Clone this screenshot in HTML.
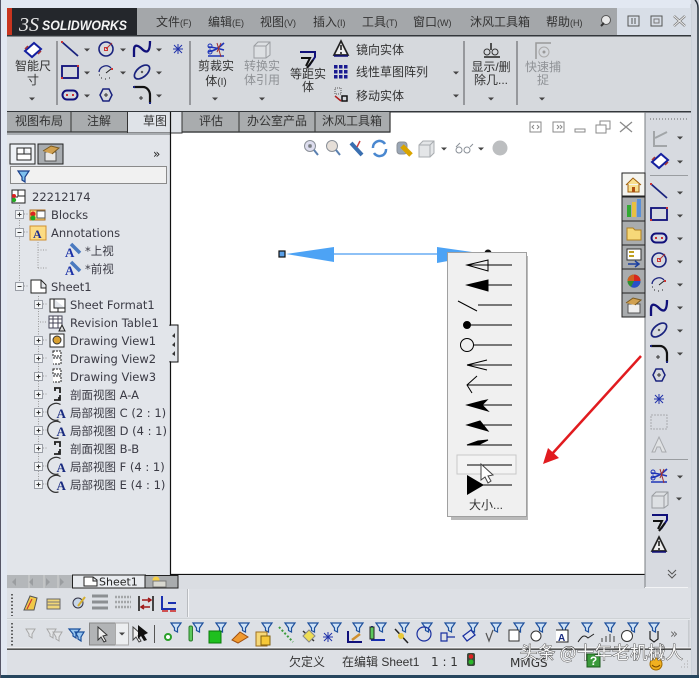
<!DOCTYPE html>
<html><head><meta charset="utf-8"><style>
html,body{margin:0;padding:0;width:699px;height:678px;overflow:hidden;background:#e3e8f1}
svg{display:block;filter:blur(.35px)}
text{font-family:"Liberation Sans","Noto Sans CJK SC",sans-serif;font-size:12px;fill:#333}
.c{text-anchor:middle}
.g{fill:#8f9296}
.t{font-family:"DejaVu Sans","Noto Sans CJK SC",sans-serif;font-size:11.500px;fill:#3a3a44}
</style></head><body>
<svg width="699" height="678" viewBox="0 0 699 678" xmlns="http://www.w3.org/2000/svg">
<defs>
<symbol id="arr" overflow="visible"><path d="M-3-1.500H3L0 1.500Z" fill="#444"/></symbol>
<symbol id="pl" overflow="visible"><rect x="-4" y="-4" width="8" height="8" fill="#f2f4f6" stroke="#9a9ea6"/><path d="M-2 0H2M0-2V2" stroke="#333"/></symbol>
<symbol id="mn" overflow="visible"><rect x="-4" y="-4" width="8" height="8" fill="#f2f4f6" stroke="#9a9ea6"/><path d="M-2 0H2" stroke="#333"/></symbol>
<symbol id="fn" overflow="visible"><path d="M-5-6H5L1.500-1V3L-1.500 1.500V-1Z" fill="#cfe3f7" stroke="#1d4f9c" stroke-width="1.200"/></symbol>
<symbol id="det" overflow="visible"><path d="M3-7.500A8.500 8.500 0 1 0 1 8" fill="none" stroke="#333" stroke-width="1.200"/><text x="-1" y="6" style="font-size:13px;font-family:'Liberation Serif',serif;fill:#1a2b80;font-weight:bold">A</text></symbol>
<symbol id="sec" overflow="visible"><path d="M-3-6H3V-1M-3 6H3V1M-2-6V-3M2 6V3" fill="none" stroke="#222" stroke-width="1.800"/></symbol>
<symbol id="line" overflow="visible"><path d="M-8-7L8 7" stroke="#1a237e" stroke-width="1.800"/><rect x="-9" y="-8" width="2" height="2" fill="#c33"/></symbol>
<symbol id="rc" overflow="visible"><rect x="-8" y="-6" width="16" height="12" fill="none" stroke="#10107a" stroke-width="1.800"/><path d="M-9 5h2v2h-2zM7-7h2v2H7z" fill="#c33"/></symbol>
<symbol id="slot" overflow="visible"><rect x="-7.500" y="-4.500" width="15" height="9" rx="4.500" fill="none" stroke="#10107a" stroke-width="2"/><path d="M-4-1h2v2h-2zM2-1h2v2H2z" fill="#c33"/></symbol>
<symbol id="circ" overflow="visible"><circle r="7" fill="none" stroke="#1a237e" stroke-width="1.600"/><path d="M0 0L6-6" stroke="#a33"/><rect x="-1.500" y="-1.500" width="3" height="3" fill="none" stroke="#c33"/></symbol>
<symbol id="arc" overflow="visible"><path d="M-7 0A7 7 0 0 1 5-4" fill="none" stroke="#1a237e" stroke-width="1.300"/><path d="M-5 6h1M-1 7h1M3 6h1M-7 3h1M0 1L5-3" stroke="#222"/><path d="M5-4h2v2H5z" fill="#c33"/></symbol>
<symbol id="spl" overflow="visible"><path d="M-8 8V1C-8-6-3-3 0 0S8 6 8-8" fill="none" stroke="#10107a" stroke-width="2.300"/></symbol>
<symbol id="ell" overflow="visible"><ellipse rx="9" ry="5" transform="rotate(-40)" fill="none" stroke="#1a237e" stroke-width="1.700"/><path d="M-1-1l2 2M1-1l-2 2" stroke="#333" stroke-width=".7"/></symbol>
<symbol id="fil" overflow="visible"><path d="M-8-8H1C5-8 8-4 8 0V8" fill="none" stroke="#111" stroke-width="2.200"/><path d="M-3 3H1M-1 1V5" stroke="#333"/><path d="M-8-9v2M8 7v2" stroke="#1a237e" stroke-width="2"/></symbol>
<symbol id="poly" overflow="visible"><path d="M-3-6H3L6 0L3 6H-3L-6 0Z" fill="none" stroke="#1a237e" stroke-width="1.500"/><path d="M-2 0H2M0-2V2" stroke="#333"/></symbol>
<symbol id="ast" overflow="visible"><path d="M-5 0H5M0-5V5M-4-4L4 4M4-4L-4 4" stroke="#2233aa"/></symbol>
<symbol id="dim" overflow="visible"><path d="M-8 1L1-7L8-1L-1 7Z" fill="#fff" stroke="#1420a0" stroke-width="2"/><path d="M-8-1l3-3M8 1L5 4" stroke="#a33" stroke-width="1.500"/></symbol>
<symbol id="trim" overflow="visible"><path d="M-8-3C-2-3 4-1 8 0M-8 2C-2 1 4-3 8-7M-8 6H8" fill="none" stroke="#1f35b8" stroke-width="1.600"/><path d="M1-7L5 7M5-7L1 2" stroke="#a03030"/><circle cx="-6" cy="-4" r="2" fill="none" stroke="#1f35b8"/><circle cx="-6" cy="2" r="2" fill="none" stroke="#1f35b8"/></symbol>
<symbol id="cube" overflow="visible"><path d="M-8-4L-4-8H8V5L4 8H-8ZM-8-4H4V8M4-4L8-8" fill="#dde0e3" stroke="#9a9da1"/></symbol>
<symbol id="off" overflow="visible"><path d="M-8-7H7V-2L1 7" fill="none" stroke="#10107a" stroke-width="2"/><path d="M-7-1H2L-2 7M5 1L-1 9" fill="none" stroke="#111" stroke-width="2"/></symbol>
<symbol id="warn" overflow="visible"><path d="M0-8L7 6H-7Z" fill="#eee" stroke="#222" stroke-width="1.700"/><path d="M0-4V1M0 3V5" stroke="#222" stroke-width="1.600"/><path d="M-7 7H7" stroke="#10107a" stroke-width="1.500"/></symbol>
</defs>

<!-- window frame -->
<rect width="699" height="678" fill="#e2e8f2"/>
<rect x="691" y="0" width="8" height="678" fill="#d4d8e0"/>
<path d="M691 4V675" stroke="#c3cbd5" stroke-width="1"/>
<path d="M695 0Q698 3 698 8V678" stroke="#28323c" stroke-width="1.500" fill="none"/>
<rect x="0" y="675" width="699" height="3" fill="#26465e"/>
<rect x="0" y="0" width="1" height="678" fill="#556"/>

<!-- title bar -->
<rect x="7" y="8" width="130" height="28" fill="#24272c"/>
<rect x="7" y="8" width="5" height="28" fill="#c8351f"/>
<rect x="137" y="8" width="480" height="28" fill="#a4a7aa"/>
<rect x="617" y="8" width="74" height="28" fill="#d8dee7"/>
<text x="19" y="31" style="font-family:'Liberation Serif',serif;font-style:italic;font-size:20px;fill:#e8e8e8">3S</text>
<text x="42" y="30" style="font-family:'Liberation Sans',sans-serif;font-size:14px;font-style:italic;fill:#f4f4f4;font-weight:bold" textLength="85" lengthAdjust="spacingAndGlyphs">SOLIDWORKS</text>
<g>
<text x="156" y="26">文件<tspan style="font-size:9px">(F)</tspan></text>
<text x="208" y="26">编辑<tspan style="font-size:9px">(E)</tspan></text>
<text x="260" y="26">视图<tspan style="font-size:9px">(V)</tspan></text>
<text x="313" y="26">插入<tspan style="font-size:9px">(I)</tspan></text>
<text x="362" y="26">工具<tspan style="font-size:9px">(T)</tspan></text>
<text x="413" y="26">窗口<tspan style="font-size:9px">(W)</tspan></text>
<text x="470" y="26">沐风工具箱</text>
<text x="546" y="26">帮助<tspan style="font-size:9px">(H)</tspan></text>
</g>
<circle cx="606" cy="20" r="4.500" fill="#e8e8e8" stroke="#555"/><path d="M601 26L604 23" stroke="#333" stroke-width="2"/>
<rect x="628" y="16" width="11" height="10" fill="none" stroke="#555"/><path d="M632 18V24M635 18V24" stroke="#555"/>
<rect x="651" y="16" width="11" height="10" fill="none" stroke="#555"/><rect x="654" y="19" width="5" height="4" fill="none" stroke="#777"/>
<path d="M674 16L685 26M685 16L674 26" stroke="#777" stroke-width="2.500"/><path d="M674 16L685 26M685 16L674 26" stroke="#eee" stroke-width="1"/>
<rect x="7" y="35" width="684" height="1.500" fill="#33373b"/>

<!-- ribbon -->
<rect x="7" y="36.500" width="684" height="75" fill="#d6d9dd"/>
<path d="M57 41V105M190 41V105M464 41V105M517 41V105" stroke="#55585c"/>
<use href="#dim" x="33" y="50"/>
<text class="c" x="33" y="70">智能尺</text><text class="c" x="33" y="84">寸</text>
<use href="#arr" x="32" y="99"/>
<use href="#line" x="70" y="49"/><use href="#arr" x="87" y="50"/>
<use href="#circ" x="106" y="49"/><use href="#arr" x="123" y="50"/>
<use href="#spl" x="142" y="49"/><use href="#arr" x="159" y="50"/>
<use href="#ast" x="178" y="49"/>
<use href="#rc" x="70" y="72"/><use href="#arr" x="87" y="73"/>
<use href="#arc" x="106" y="72"/><use href="#arr" x="123" y="73"/>
<use href="#ell" x="142" y="72"/><use href="#arr" x="159" y="73"/>
<use href="#slot" x="70" y="95"/><use href="#arr" x="87" y="96"/>
<use href="#poly" x="106" y="95"/>
<use href="#fil" x="142" y="95"/><use href="#arr" x="159" y="96"/>
<use href="#trim" x="216" y="50"/>
<text class="c" x="216" y="70">剪裁实</text><text class="c" x="216" y="85">体<tspan style="font-size:10px">(I)</tspan></text>
<use href="#arr" x="215" y="99"/>
<use href="#cube" x="262" y="50"/>
<text class="c g" x="262" y="70">转换实</text><text class="c g" x="262" y="84">体引用</text>
<use href="#arr" x="262" y="99"/>
<use href="#off" x="308" y="59"/>
<text class="c" x="308" y="78">等距实</text><text class="c" x="308" y="91">体</text>
<use href="#warn" x="341" y="49"/>
<g fill="#1a1a90"><rect x="334" y="65" width="3.500" height="3.500"/><rect x="339" y="65" width="3.500" height="3.500"/><rect x="344" y="65" width="3.500" height="3.500"/><rect x="334" y="70" width="3.500" height="3.500"/><rect x="339" y="70" width="3.500" height="3.500"/><rect x="344" y="70" width="3.500" height="3.500"/><rect x="334" y="75" width="3.500" height="3.500"/><rect x="339" y="75" width="3.500" height="3.500"/><rect x="344" y="75" width="3.500" height="3.500"/></g>
<path d="M335 88h6v6h-6z" fill="none" stroke="#555" stroke-dasharray="1 1"/><rect x="342" y="96" width="5" height="5" fill="none" stroke="#111" stroke-width="1.500"/><path d="M335 96L341 101" stroke="#b02020" stroke-width="1.500"/>
<text x="356" y="54">镜向实体</text><text x="356" y="76">线性草图阵列</text><text x="356" y="100">移动实体</text>
<use href="#arr" x="456" y="73"/><use href="#arr" x="456" y="96"/>
<circle cx="487" cy="52" r="3" fill="none" stroke="#333"/><circle cx="495" cy="52" r="3" fill="none" stroke="#333"/><path d="M491 43V50M484 57H500" stroke="#222" stroke-width="1.500"/>
<text class="c" x="491" y="71">显示/删</text><text class="c" x="491" y="84">除几...</text>
<use href="#arr" x="491" y="99"/>
<path d="M536 59V43H551" fill="none" stroke="#999" stroke-width="1.500"/><circle cx="544" cy="52" r="5" fill="none" stroke="#aaa"/><circle cx="544" cy="52" r="1.500" fill="#999"/>
<text class="c g" x="543" y="71">快速捕</text><text class="c g" x="543" y="84">捉</text>
<use href="#arr" x="542" y="99"/>
<rect x="7" y="111" width="684" height="1.500" fill="#33373b"/>

<!-- canvas -->
<rect x="171" y="112.500" width="474" height="462" fill="#fff"/>
<rect x="7" y="112" width="383" height="21" fill="#d8dbe0"/>
<!-- tabs -->
<rect x="7" y="112" width="383" height="20" fill="#a9acae"/>
<path d="M7 132H127M182 132H390V112" stroke="#333" stroke-width="1.200" fill="none"/>
<path d="M71 112V132M239 112V132M315 112V132" stroke="#333"/>
<path d="M127.500 112V133H182V112" fill="#dfe3e8" stroke="#333"/>
<text class="c" x="39" y="125">视图布局</text><text class="c" x="99" y="125">注解</text><text class="c" x="155" y="125">草图</text><text class="c" x="211" y="125">评估</text><text class="c" x="277" y="125">办公室产品</text><text class="c" x="352" y="125">沐风工具箱</text>

<!-- view controls -->
<g stroke="#8a9098" fill="none">
<circle cx="310" cy="146" r="5.500" fill="#dde"/><path d="M314 150L318 155" stroke="#5a80b0" stroke-width="2"/><circle cx="310" cy="146" r="1.500" fill="#777"/>
<circle cx="332" cy="146" r="5.500" fill="#e6dfd8"/><path d="M336 150L340 155" stroke="#5a80b0" stroke-width="2"/>
<path d="M351 143L362 155" stroke="#3a6fb0" stroke-width="4"/><path d="M360 141L357 147" stroke="#c44" stroke-width="1.500"/>
<path d="M373 148A6.500 6.500 0 0 1 385 144" stroke="#4a88d0" stroke-width="2.500"/><path d="M386 149A6.500 6.500 0 0 1 374 153" stroke="#4a88d0" stroke-width="2.500"/>
<rect x="397" y="142" width="10" height="12" rx="3" fill="#9aa6b5"/><path d="M402 146L411 155" stroke="#d9a400" stroke-width="5"/>
<path d="M419 145L423 141H434V153L430 157H419ZM419 145H430V157M430 145L434 141" fill="#e4e6e8" stroke="#a8acb0"/>
<circle cx="459" cy="150" r="3"/><circle cx="467" cy="150" r="3"/><path d="M456 147L460 143M470 147L473 144"/>
</g>
<use href="#arr" x="444" y="149"/><use href="#arr" x="481" y="149"/>
<circle cx="500" cy="148" r="7.500" fill="#bcbec0"/>
<!-- doc controls -->
<g fill="none" stroke="#8a8a8a"><rect x="530" y="122" width="11" height="10"/><rect x="553" y="122" width="11" height="10"/><path d="M534 125L532 127L534 129M537 125L539 127L537 129M557 125L559 127L557 129M560 125L562 127L560 129"/>
<rect x="575" y="129" width="10" height="3"/><rect x="596" y="125" width="10" height="8"/><path d="M600 125V121H610V129H606"/><path d="M620 122L632 132M632 122L620 132" stroke-width="1.300"/></g>

<!-- drawing -->
<path d="M334 254H438" stroke="#4a9cf0" stroke-width="1.200"/>
<path d="M286 254L334 247V262Z" fill="#4da3f5"/>
<path d="M437 247L486 254L437 263Z" fill="#4da3f5"/>
<rect x="279" y="251" width="6" height="6" fill="#5aa0e8" stroke="#111" stroke-width="1.200"/>
<circle cx="488" cy="253" r="3.500" fill="#111"/>

<!-- popup -->
<rect x="451" y="256" width="77" height="264" fill="#8c8c8c" opacity=".6"/>
<rect x="447.500" y="252.500" width="79" height="264" fill="#f0f0f0" stroke="#a0a0a0"/>
<g stroke="#000" stroke-width="1" fill="none">
<path d="M467 265H512"/><path d="M467 265L488 260V271Z"/>
<path d="M467 285H512"/><path d="M467 285L488 280V291Z" fill="#000"/>
<path d="M478 305H512M458 301L477 311"/>
<path d="M467 325H512"/><circle cx="467" cy="325" r="3.500" fill="#000"/>
<path d="M473 345H512"/><circle cx="467" cy="345" r="6.500"/>
<path d="M467 365H512M467 365L487 360M467 365L487 370"/>
<path d="M467 385H512M477 376L467 385L472 393"/>
<path d="M467 405H512"/><path d="M467 405L482 401L487 400L482 405L488 411Z" fill="#000"/>
<path d="M467 425H512"/><path d="M467 425L480 421L488 431Z" fill="#000"/>
<path d="M467 445H512"/><path d="M467 445L478 441L488 440L478 445Z" fill="#000"/>
</g>
<rect x="457" y="455" width="59" height="19" fill="#f3f3f3" stroke="#c8c8c8"/>
<g stroke="#000" fill="none"><path d="M467 465H512M467 485H512"/></g>
<path d="M467 475L484 485L467 495Z" fill="#000"/>
<path d="M481 464V480L485 477L488 483L491 481L488 476L493 475Z" fill="#fff" stroke="#444"/>
<text class="c" x="486" y="509">大小...</text>

<!-- red arrow -->
<path d="M641 356L552 454" stroke="#e11b1f" stroke-width="2.500"/>
<path d="M543 464L548 448L559 458Z" fill="#e11b1f"/>

<!-- feature pane -->
<rect x="7" y="133" width="163" height="442" fill="#e2e5ea"/>
<rect x="7" y="133" width="163" height="2" fill="#a8acb0"/>
<path d="M170.500 112V575M171 574.500H645" stroke="#111" stroke-width="1.200"/>
<rect x="170" y="325" width="8" height="37" fill="#e2e5ea" stroke="#111"/>
<rect x="168" y="326" width="4" height="35" fill="#e2e5ea"/>
<path d="M175 333L172 336L175 338M175 342L172 345L175 347M175 351L172 354L175 356" fill="#333"/>
<!-- pane tabs -->
<rect x="10" y="144" width="25" height="20" fill="#eef1f5" stroke="#222"/>
<rect x="38" y="144" width="25" height="20" fill="#a8acb0" stroke="#222"/>
<path d="M17 148H31V160H17ZM24 148V154H31M17 154H24" fill="#fff" stroke="#222"/>
<rect x="45" y="152" width="11" height="9" fill="#e8e8e8" stroke="#555"/><path d="M43 151L51 146L59 148L52 154" fill="#d0a050" stroke="#7a5a20"/>
<text x="153" y="158" style="font-size:12px;font-family:'DejaVu Sans',sans-serif;fill:#222">»</text>
<rect x="10.500" y="166.500" width="156" height="17" fill="#f1f1f1" stroke="#8a8a8a"/>
<path d="M18 171H29L25 177V182L22 180V177Z" fill="#7ec0ee" stroke="#1a3f8a" stroke-width="1.200"/>
<!-- tree lines -->
<g stroke="#999" stroke-dasharray="1 1.500" fill="none">
<path d="M19.500 200V287M38.500 296V486M38 237V268M38 250H48M38 268H48M24 214H29M24 232H29M24 286H29M43 304H47M40 322H47M43 340H47M43 358H47M43 376H47M43 394H47M43 412H47M43 430H47M43 448H47M43 466H47M43 484H47"/>
</g>
<rect x="12" y="190" width="13" height="13" fill="#fff" stroke="#222"/><path d="M18 190V196H25M12 197H18" stroke="#222" fill="none"/>
<circle cx="14" cy="196" r="2" fill="#d22"/><circle cx="14" cy="200" r="2.200" fill="#2a2"/>
<text class="t" x="32" y="201">22212174</text>
<use href="#pl" x="19.500" y="214.500"/>
<path d="M30 210H45V220H30Z" fill="#f8d879" stroke="#b07020"/><rect x="37" y="211" width="8" height="7" fill="#fff" stroke="#555"/><circle cx="33" cy="214" r="2.500" fill="#d22"/><circle cx="33" cy="218" r="2.500" fill="#2a2"/>
<text class="t" x="51" y="219">Blocks</text>
<use href="#mn" x="19.500" y="232.500"/>
<path d="M30 226H46V240H30Z" fill="#fcdc84" stroke="#d09030"/><text x="33" y="238" style="font-size:12px;font-weight:bold;font-family:'Liberation Serif',serif;fill:#1a2b90">A</text>
<text class="t" x="51" y="237">Annotations</text>
<text x="65" y="257" style="font-size:13px;font-family:'Liberation Serif',serif;font-weight:bold;fill:#1c32a8">A</text><path d="M71 244L80 253" stroke="#4a7ac0" stroke-width="3.500"/>
<text class="t" x="85" y="255">*上视</text>
<text x="65" y="275" style="font-size:13px;font-family:'Liberation Serif',serif;font-weight:bold;fill:#1c32a8">A</text><path d="M71 262L80 271" stroke="#4a7ac0" stroke-width="3.500"/>
<text class="t" x="85" y="273">*前视</text>
<use href="#mn" x="19.500" y="286.500"/>
<path d="M31 280H41L46 285V293H31ZM41 280V288H46" fill="#fff" stroke="#222"/>
<text class="t" x="51" y="291">Sheet1</text>
<use href="#pl" x="38.500" y="304.500"/>
<path d="M50 299H65V312H50ZM54 299V308H65M58 308V312" fill="#fff" stroke="#222"/>
<text class="t" x="70" y="309">Sheet Format1</text>
<rect x="49" y="316" width="13" height="12" fill="#fff" stroke="#445"/><path d="M49 319H62M49 323H62M53 316V328M58 316V328" stroke="#445"/><path d="M59 331L62 325L65 331Z" fill="#ddd" stroke="#222"/>
<text class="t" x="70" y="327">Revision Table1</text>
<use href="#pl" x="38.500" y="340.500"/>
<rect x="50" y="334" width="14" height="13" fill="#fff" stroke="#222"/><circle cx="57" cy="340" r="4" fill="#d9a030" stroke="#333"/>
<text class="t" x="70" y="345">Drawing View1</text>
<use href="#pl" x="38.500" y="358.500"/>
<path d="M53 351H61V356H53ZM53 358H61V364H53" fill="#fff" stroke="#222" stroke-dasharray="2 1"/>
<text class="t" x="70" y="363">Drawing View2</text>
<use href="#pl" x="38.500" y="376.500"/>
<path d="M53 369H61V374H53ZM53 376H61V382H53" fill="#fff" stroke="#222" stroke-dasharray="2 1"/>
<text class="t" x="70" y="381">Drawing View3</text>
<use href="#pl" x="38.500" y="394.500"/><use href="#sec" x="57" y="394"/>
<text class="t" x="70" y="399">剖面视图 A-A</text>
<use href="#pl" x="38.500" y="412.500"/><use href="#det" x="57.500" y="412"/>
<text class="t" x="70" y="417">局部视图 C (2 : 1)</text>
<use href="#pl" x="38.500" y="430.500"/><use href="#det" x="57.500" y="430"/>
<text class="t" x="70" y="435">局部视图 D (4 : 1)</text>
<use href="#pl" x="38.500" y="448.500"/><use href="#sec" x="57" y="448"/>
<text class="t" x="70" y="453">剖面视图 B-B</text>
<use href="#pl" x="38.500" y="466.500"/><use href="#det" x="57.500" y="466"/>
<text class="t" x="70" y="471">局部视图 F (4 : 1)</text>
<use href="#pl" x="38.500" y="484.500"/><use href="#det" x="57.500" y="484"/>
<text class="t" x="70" y="489">局部视图 E (4 : 1)</text>

<!-- bottom strips -->
<rect x="7" y="575" width="684" height="100" fill="#dde0e5"/>
<rect x="7" y="575" width="638" height="14" fill="#dadde2"/>
<rect x="7" y="575" width="65" height="13" fill="#b4b7ba"/>
<path d="M29 575V588M44 575V588M58 575V588" stroke="#d0d0d0"/>
<path d="M16 578L12 582L16 586ZM33 578L29 582L33 586ZM46 578L50 582L46 586ZM60 578L64 582L60 586Z" fill="#9a9da0"/>
<rect x="72.500" y="575" width="73" height="13" fill="#e8ebef" stroke="#222"/>
<rect x="145" y="575.500" width="33" height="12.500" fill="#a9acae" stroke="#222"/>
<path d="M84 577H93L97 580V586H84ZM93 577V581H97" fill="#fff" stroke="#222"/>
<text x="99" y="585.500" style="font-size:11px;font-family:'DejaVu Sans',sans-serif;fill:#222">Sheet1</text>
<circle cx="156" cy="580" r="3.500" fill="#f6d04a"/><rect x="153" y="581" width="13" height="6" fill="#d8d8d0" stroke="#777"/>
<!-- right toolbar -->
<rect x="645" y="112.500" width="46" height="475" fill="#d7dae0"/>
<rect x="644.500" y="112" width="1" height="476" fill="#7a7d82"/>
<path d="M650 119H688" stroke="#666" stroke-dasharray="1 2"/>
<path d="M654 131V146H667M655 138L667 132" fill="none" stroke="#a2a5a8" stroke-width="2"/><use href="#arr" x="680" y="138"/>
<use href="#dim" x="660" y="161"/><use href="#arr" x="680" y="162"/>
<path d="M650 175.500H688M650 459.500H688" stroke="#9a9da1"/>
<use href="#line" x="659" y="191"/><use href="#arr" x="680" y="193"/>
<use href="#rc" x="659" y="214"/><use href="#arr" x="680" y="216"/>
<use href="#slot" x="659" y="238"/><use href="#arr" x="680" y="239"/>
<use href="#circ" x="659" y="260"/><use href="#arr" x="680" y="262"/>
<use href="#arc" x="659" y="284"/><use href="#arr" x="680" y="285"/>
<use href="#spl" x="659" y="308"/><use href="#arr" x="680" y="308"/>
<use href="#ell" x="659" y="330"/><use href="#arr" x="680" y="331"/>
<use href="#fil" x="659" y="354"/><use href="#arr" x="680" y="354"/>
<use href="#poly" x="659" y="375"/>
<use href="#ast" x="659" y="399"/>
<rect x="651" y="415" width="16" height="14" fill="none" stroke="#a8aaae" stroke-dasharray="2 1"/>
<path d="M652 452L659 437L666 452H662L660 447H657L655 452Z" fill="#e0e2e4" stroke="#a8aaae"/>
<use href="#trim" x="659" y="476"/><use href="#arr" x="680" y="477"/>
<use href="#cube" x="660" y="500"/><use href="#arr" x="679" y="499"/>
<use href="#off" x="660" y="522"/><use href="#warn" x="659" y="545"/>
<path d="M668 570L672 574L676 570M668 574L672 578L676 574" fill="none" stroke="#555"/>
<path d="M645 587.500H688" stroke="#f2f3f5"/>
<!-- task pane tabs -->
<rect x="622" y="173" width="23" height="23" fill="#f4f4f0" stroke="#222"/>
<path d="M626 185L633 178L641 185M628 184V192H639V184" fill="#f8e090" stroke="#a06010"/><rect x="632" y="187" width="3" height="5" fill="#b05010"/>
<rect x="622" y="197" width="23" height="24" fill="#a9acae" stroke="#222"/>
<path d="M627 205h4v12h-4z" fill="#3a3"/><path d="M632 202h4v15h-4z" fill="#e8c040"/><path d="M637 199h4v18h-4z" fill="#5a90d8"/>
<rect x="622" y="221" width="23" height="24" fill="#a9acae" stroke="#222"/>
<path d="M627 228H633L635 230H641V240H627Z" fill="#f6d878" stroke="#b08020"/>
<rect x="622" y="245" width="23" height="24" fill="#a9acae" stroke="#222"/>
<rect x="627" y="249" width="14" height="11" fill="#fff" stroke="#333"/><path d="M629 252H634M629 256H634" stroke="#c0a020" stroke-width="2"/><path d="M628 264H638M635 261L639 264L635 267" stroke="#1a3fa0" stroke-width="1.500" fill="none"/>
<rect x="622" y="269" width="23" height="24" fill="#a9acae" stroke="#222"/>
<circle cx="634" cy="281" r="6.500" fill="#2f8f30"/><path d="M634 274.500A6.500 6.500 0 0 1 640.500 281H634Z" fill="#d8261c"/><path d="M634 274.500A6.500 6.500 0 0 0 627.500 281H634Z" fill="#d06020"/><path d="M634 281H640.500A6.500 6.500 0 0 1 631 287Z" fill="#2a50c8"/>
<rect x="622" y="293" width="23" height="24" fill="#a9acae" stroke="#222"/>
<rect x="628" y="304" width="12" height="9" fill="#eee" stroke="#555"/><path d="M626 303L633 298L641 300L635 305" fill="#d0a050" stroke="#7a5a20"/>

<!-- toolbars -->
<path d="M12 594V616M12 623V647" stroke="#333" stroke-width="1.500" stroke-dasharray="1.500 2"/>
<path d="M187.500 589V617" stroke="#b8bbbf"/><path d="M188.500 589V617" stroke="#f4f5f7"/>
<path d="M7 619H691" stroke="#f0f2f4"/><path d="M7 618.500H690" stroke="#b8bbbf" opacity=".5"/>
<path d="M30 596L37 598L34 610H24Z" fill="#f0c848" stroke="#555"/><path d="M32 599L27 609" stroke="#c23"/>
<path d="M47 599H60V609H47Z" fill="#f0d678" stroke="#666"/><path d="M47 602H60M47 605H60" stroke="#777"/>
<circle cx="78" cy="603" r="5" fill="#c8d6e8" stroke="#334"/><path d="M85 597L78 606" stroke="#d6b030" stroke-width="2"/>
<path d="M92 596H108M92 602H108M92 608H108" stroke="#8c8f92" stroke-width="3"/>
<path d="M115 597H131M115 602H131M115 607H131" stroke="#a4a6a8" stroke-width="2.500" stroke-dasharray="2 1"/>
<path d="M139 596V611M153 596V611" stroke="#444" stroke-width="2"/><path d="M142 600H150M148 598L151 600L148 602M150 607H142M144 605L141 607L144 609" stroke="#a01818" stroke-width="1.500" fill="none"/>
<path d="M162 596V609H176" fill="none" stroke="#1a30b0" stroke-width="2"/><path d="M162 611H168M170 611H176" stroke="#c22" stroke-width="1.500"/><path d="M168 603H176" stroke="#1a30b0" stroke-width="2"/>
<rect x="688.500" y="620" width=".8" height="28" fill="#b0b3b7"/>
<path d="M7 649H691" stroke="#222" stroke-width="1.500"/>
<path d="M7 648H691" stroke="#fdfdfd"/>
<!-- select icons -->
<path d="M26 629H35L32 634V638L29 636V634Z" fill="#e4e6e8" stroke="#a8a8a8"/>
<path d="M47 629H56L53 634V638L50 636V634ZM53 632H62L59 637V641L56 639V637Z" fill="#e4e6e8" stroke="#a8a8a8"/>
<path d="M69 629H80L76 634V638L73 636V634ZM75 632H84L81 637V641L78 639V637Z" fill="#9ac8f0" stroke="#1a4f9c" stroke-width="1.200"/>
<rect x="89.500" y="623" width="26" height="22" fill="#b2b4b6" stroke="#888"/><rect x="115.500" y="623" width="13" height="22" fill="#eceef0" stroke="#aaa"/>
<path d="M98 627V640L101 637L104 642L106 641L103 636L107 635Z" fill="#eee" stroke="#333"/>
<use href="#arr" x="122" y="634"/>
<path d="M133 627V640L136 637L139 642L141 641L138 636L142 635Z" fill="#f0f0f0" stroke="#444"/><path d="M138 625V639L141 636L144 641L147 640L144 635L148 633Z" fill="#111"/>
<path d="M154.500 625V643" stroke="#555"/>
<g>
<use href="#fn" x="176" y="629"/><circle cx="168" cy="637" r="3" fill="#fff" stroke="#2aa02a" stroke-width="2"/>
<use href="#fn" x="198" y="629"/><rect x="189" y="626" width="3.500" height="15" rx="1.500" fill="#5cc85c" stroke="#2c7c2c"/>
<use href="#fn" x="221" y="629"/><rect x="209" y="631" width="12" height="12" fill="#1fc01f" stroke="#0a7a0a"/>
<use href="#fn" x="244" y="629"/><path d="M232 640L240 632L248 637L238 643Z" fill="#f09a30" stroke="#a05010"/>
<use href="#fn" x="267" y="629"/><path d="M256 632H267V646H256Z" fill="#f6d878" stroke="#a07020"/><rect x="261" y="636" width="9" height="9" fill="#f6c838" stroke="#806010"/>
<use href="#fn" x="290" y="629"/><path d="M279 627L293 642" stroke="#3c9c3c" stroke-width="2" stroke-dasharray="2 2"/>
<use href="#fn" x="313" y="629"/><path d="M303 631L314 641" stroke="#333" stroke-width="1.500"/><path d="M303 636L309 630L315 636L309 642Z" fill="#eedd55" stroke="#888"/>
<use href="#fn" x="336" y="629"/><use href="#ast" x="328" y="637"/>
<use href="#fn" x="358" y="629"/><path d="M348 631V642H362" fill="none" stroke="#10107a" stroke-width="2"/><path d="M352 640L360 634" stroke="#d09030" stroke-width="2.500"/>
<use href="#fn" x="381" y="629"/><path d="M372 626V640H385" fill="none" stroke="#1a30b0" stroke-width="2"/><rect x="370" y="627" width="4" height="12" fill="#5cc85c" stroke="#222"/>
<use href="#fn" x="404" y="629"/><path d="M395 629L408 643" stroke="#222" stroke-width="1.500"/><circle cx="401" cy="636" r="3" fill="#e8c838"/>
<use href="#fn" x="427" y="629"/><circle cx="424" cy="634" r="7" fill="none" stroke="#1a30a0" stroke-width="1.200"/>
<use href="#fn" x="450" y="629"/><path d="M441 633h6v8h-6zM447 637h8" fill="none" stroke="#1a30a0" stroke-width="1.200"/>
<use href="#fn" x="473" y="629"/><path d="M463 636L471 630L475 635L467 641Z" fill="#e0e4f0" stroke="#1a30a0" stroke-width="1.300"/>
<use href="#fn" x="496" y="629"/><path d="M486 633L489 641L493 630" fill="none" stroke="#555" stroke-width="1.200"/>
<use href="#fn" x="519" y="629"/><rect x="509" y="630" width="10" height="11" fill="#fff" stroke="#333"/>
<use href="#fn" x="541" y="629"/><circle cx="536" cy="636" r="5" fill="#fff" stroke="#333"/>
<use href="#fn" x="564" y="629"/><path d="M556 630H568V642H556" fill="#fff" stroke="#222"/><text x="558" y="641" style="font-size:10px;fill:#1a2b80;font-weight:bold">A</text>
<use href="#fn" x="587" y="629"/><path d="M578 642C582 636 584 634 588 638L594 634" fill="none" stroke="#222"/>
<use href="#fn" x="610" y="629"/><path d="M602 638V642M606 636V642M610 634V642M614 636V642" stroke="#444"/>
<use href="#fn" x="633" y="629"/><circle cx="627" cy="636" r="5.500" fill="#fff" stroke="#333"/>
<use href="#fn" x="654" y="629"/><path d="M650 631V639L654 642L658 639V631" fill="none" stroke="#222" stroke-width="1.200"/>
</g>
<text x="670" y="638" style="font-size:13px;font-family:'DejaVu Sans',sans-serif;fill:#666">»</text>
<!-- status -->
<text x="289" y="666" style="fill:#333">欠定义</text>
<text x="342" y="666" style="fill:#333">在编辑 Sheet1</text>
<text x="431" y="666" style="font-size:12px;font-family:'DejaVu Sans',sans-serif;fill:#333">1 : 1</text>
<rect x="467" y="653" width="8" height="13" rx="2" fill="#3a4a3a"/><circle cx="471" cy="656.500" r="2.300" fill="#d22"/><circle cx="471" cy="662" r="2.500" fill="#2ab82a"/>
<text x="510" y="667" style="font-size:12px;font-family:'DejaVu Sans',sans-serif;fill:#333">MMGS</text>
<rect x="587" y="654" width="13" height="13" fill="#3a9a3a" stroke="#1a5a1a"/>
<text class="c" x="593.500" y="665" style="font-size:12px;font-weight:bold;font-family:'Liberation Sans',sans-serif;fill:#fff">?</text>
<circle cx="656" cy="664" r="6" fill="#f0b020" stroke="#a06a00"/><path d="M652 665Q656 669 660 665" fill="none" stroke="#7a4a00"/>
<path d="M681 667h1M684 664h1M684 667h1M687 661h1M687 664h1M687 667h1" stroke="#aaa"/>
<!-- watermark -->
<text x="520" y="659" style="font-family:'Noto Sans CJK SC',sans-serif;font-size:17.500px;fill:#f8f8f8;stroke:#333;stroke-width:.8;paint-order:stroke" textLength="163">头条 @十年老机械人</text>
</svg>
</body></html>
